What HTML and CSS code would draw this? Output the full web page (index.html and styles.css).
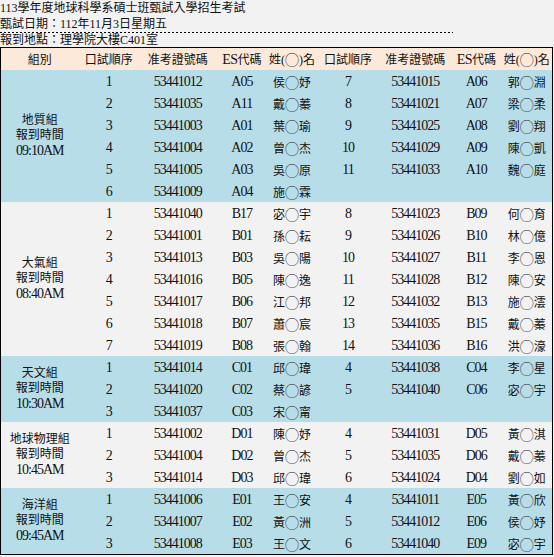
FILE: index.html
```html
<!DOCTYPE html>
<html lang="zh-Hant">
<head>
<meta charset="utf-8">
<title>113學年度地球科學系碩士班甄試入學招生考試</title>
<link rel="stylesheet" href="styles.css">
</head>
<body>
<div class="info">
  <div class="line">113學年度地球科學系碩士班甄試入學招生考試</div>
  <div class="line dotted">甄試日期：112年11月3日星期五</div>
  <div class="line last">報到地點：理學院大樓C401室</div>
</div>
<table class="sched">
  <colgroup>
    <col class="c1"><col class="c2"><col class="c3"><col class="c4"><col class="c5">
    <col class="c6"><col class="c7"><col class="c8"><col class="c9">
  </colgroup>
  <thead>
    <tr>
      <th>組別</th><th>口試順序</th><th>准考證號碼</th><th><span class="es">ES</span>代碼</th><th>姓(<span class="cir">◯</span>)名</th>
      <th>口試順序</th><th>准考證號碼</th><th><span class="es">ES</span>代碼</th><th>姓(<span class="cir">◯</span>)名</th>
    </tr>
  </thead>
  <tbody class="blue">
    <tr><td class="grp" rowspan="6">地質組<br>報到時間<br><span class="tm">09:10AM</span></td><td class="n">1</td><td class="n">53441012</td><td class="n">A05</td><td class="nm">侯<span class="cir">◯</span>妤</td><td class="n">7</td><td class="n">53441015</td><td class="n">A06</td><td class="nm">郭<span class="cir">◯</span>淵</td></tr>
    <tr><td class="n">2</td><td class="n">53441035</td><td class="n">A11</td><td class="nm">戴<span class="cir">◯</span>蓁</td><td class="n">8</td><td class="n">53441021</td><td class="n">A07</td><td class="nm">梁<span class="cir">◯</span>柔</td></tr>
    <tr><td class="n">3</td><td class="n">53441003</td><td class="n">A01</td><td class="nm">葉<span class="cir">◯</span>瑜</td><td class="n">9</td><td class="n">53441025</td><td class="n">A08</td><td class="nm">劉<span class="cir">◯</span>翔</td></tr>
    <tr><td class="n">4</td><td class="n">53441004</td><td class="n">A02</td><td class="nm">曾<span class="cir">◯</span>杰</td><td class="n">10</td><td class="n">53441029</td><td class="n">A09</td><td class="nm">陳<span class="cir">◯</span>凱</td></tr>
    <tr><td class="n">5</td><td class="n">53441005</td><td class="n">A03</td><td class="nm">吳<span class="cir">◯</span>原</td><td class="n">11</td><td class="n">53441033</td><td class="n">A10</td><td class="nm">魏<span class="cir">◯</span>庭</td></tr>
    <tr><td class="n">6</td><td class="n">53441009</td><td class="n">A04</td><td class="nm">施<span class="cir">◯</span>霖</td><td></td><td></td><td></td><td></td></tr>
  </tbody>
  <tbody class="gray">
    <tr><td class="grp" rowspan="7">大氣組<br>報到時間<br><span class="tm">08:40AM</span></td><td class="n">1</td><td class="n">53441040</td><td class="n">B17</td><td class="nm">宓<span class="cir">◯</span>宇</td><td class="n">8</td><td class="n">53441023</td><td class="n">B09</td><td class="nm">何<span class="cir">◯</span>育</td></tr>
    <tr><td class="n">2</td><td class="n">53441001</td><td class="n">B01</td><td class="nm">孫<span class="cir">◯</span>耘</td><td class="n">9</td><td class="n">53441026</td><td class="n">B10</td><td class="nm">林<span class="cir">◯</span>億</td></tr>
    <tr><td class="n">3</td><td class="n">53441013</td><td class="n">B03</td><td class="nm">吳<span class="cir">◯</span>陽</td><td class="n">10</td><td class="n">53441027</td><td class="n">B11</td><td class="nm">李<span class="cir">◯</span>恩</td></tr>
    <tr><td class="n">4</td><td class="n">53441016</td><td class="n">B05</td><td class="nm">陳<span class="cir">◯</span>逸</td><td class="n">11</td><td class="n">53441028</td><td class="n">B12</td><td class="nm">陳<span class="cir">◯</span>安</td></tr>
    <tr><td class="n">5</td><td class="n">53441017</td><td class="n">B06</td><td class="nm">江<span class="cir">◯</span>邦</td><td class="n">12</td><td class="n">53441032</td><td class="n">B13</td><td class="nm">施<span class="cir">◯</span>澐</td></tr>
    <tr><td class="n">6</td><td class="n">53441018</td><td class="n">B07</td><td class="nm">蕭<span class="cir">◯</span>宸</td><td class="n">13</td><td class="n">53441035</td><td class="n">B15</td><td class="nm">戴<span class="cir">◯</span>蓁</td></tr>
    <tr><td class="n">7</td><td class="n">53441019</td><td class="n">B08</td><td class="nm">張<span class="cir">◯</span>翰</td><td class="n">14</td><td class="n">53441036</td><td class="n">B16</td><td class="nm">洪<span class="cir">◯</span>濠</td></tr>
  </tbody>
  <tbody class="blue">
    <tr><td class="grp" rowspan="3">天文組<br>報到時間<br><span class="tm">10:30AM</span></td><td class="n">1</td><td class="n">53441014</td><td class="n">C01</td><td class="nm">邱<span class="cir">◯</span>瑋</td><td class="n">4</td><td class="n">53441038</td><td class="n">C04</td><td class="nm">李<span class="cir">◯</span>星</td></tr>
    <tr><td class="n">2</td><td class="n">53441020</td><td class="n">C02</td><td class="nm">蔡<span class="cir">◯</span>諺</td><td class="n">5</td><td class="n">53441040</td><td class="n">C06</td><td class="nm">宓<span class="cir">◯</span>宇</td></tr>
    <tr><td class="n">3</td><td class="n">53441037</td><td class="n">C03</td><td class="nm">宋<span class="cir">◯</span>甯</td><td></td><td></td><td></td><td></td></tr>
  </tbody>
  <tbody class="gray">
    <tr><td class="grp" rowspan="3">地球物理組<br>報到時間<br><span class="tm">10:45AM</span></td><td class="n">1</td><td class="n">53441002</td><td class="n">D01</td><td class="nm">陳<span class="cir">◯</span>妤</td><td class="n">4</td><td class="n">53441031</td><td class="n">D05</td><td class="nm">黃<span class="cir">◯</span>淇</td></tr>
    <tr><td class="n">2</td><td class="n">53441004</td><td class="n">D02</td><td class="nm">曾<span class="cir">◯</span>杰</td><td class="n">5</td><td class="n">53441035</td><td class="n">D06</td><td class="nm">戴<span class="cir">◯</span>蓁</td></tr>
    <tr><td class="n">3</td><td class="n">53441014</td><td class="n">D03</td><td class="nm">邱<span class="cir">◯</span>瑋</td><td class="n">6</td><td class="n">53441024</td><td class="n">D04</td><td class="nm">劉<span class="cir">◯</span>如</td></tr>
  </tbody>
  <tbody class="blue">
    <tr><td class="grp" rowspan="3">海洋組<br>報到時間<br><span class="tm">09:45AM</span></td><td class="n">1</td><td class="n">53441006</td><td class="n">E01</td><td class="nm">王<span class="cir">◯</span>安</td><td class="n">4</td><td class="n">53441011</td><td class="n">E05</td><td class="nm">黃<span class="cir">◯</span>欣</td></tr>
    <tr><td class="n">2</td><td class="n">53441007</td><td class="n">E02</td><td class="nm">黃<span class="cir">◯</span>洲</td><td class="n">5</td><td class="n">53441012</td><td class="n">E06</td><td class="nm">侯<span class="cir">◯</span>妤</td></tr>
    <tr><td class="n">3</td><td class="n">53441008</td><td class="n">E03</td><td class="nm">王<span class="cir">◯</span>文</td><td class="n">6</td><td class="n">53441040</td><td class="n">E09</td><td class="nm">宓<span class="cir">◯</span>宇</td></tr>
  </tbody>
</table>
</body>
</html>
```
FILE: styles.css
```css
html, body {
  margin: 0;
  padding: 0;
  background: #f2f2f2;
  color: #111;
  font-family: "Liberation Serif", "Noto Sans CJK TC", serif;
}

.info {
  font-size: 12px;
}

.info .line {
  height: 16px;
  line-height: 16px;
  white-space: nowrap;
}

.info .dotted {
  width: 453px;
  padding-bottom: 1px;
  background: repeating-linear-gradient(to right, #000 0 2px, transparent 2px 4px) left bottom / 100% 1px no-repeat;
}

.info .last {
  height: 14px;
  line-height: 14px;
}

.sched {
  border-collapse: collapse;
  table-layout: fixed;
  width: 553px;
  border: 1px solid #000;
}

.c1 { width: 78px; }
.c2 { width: 60px; }
.c3 { width: 78px; }
.c4 { width: 50px; }
.c5 { width: 50px; }
.c6 { width: 62px; }
.c7 { width: 72px; }
.c8 { width: 50px; }
.c9 { width: 51px; }

.sched th {
  background: #fde9d9;
  font-weight: normal;
  font-size: 12px;
  height: 22px;
  padding: 0;
  text-align: center;
  white-space: nowrap;
}

.sched th .es {
  font-size: 14px;
  letter-spacing: -0.5px;
}

.sched .cir {
  font-family: "Noto Sans CJK TC", sans-serif;
  font-size: 14px;
  line-height: 0;
  vertical-align: -1px;
  color: #333;
}

.sched td {
  height: 22px;
  padding: 0;
  text-align: center;
  vertical-align: middle;
  white-space: nowrap;
  font-size: 12px;
  line-height: 15px;
}

.sched td.n {
  font-size: 14px;
  letter-spacing: -1px;
}

.sched td.nm {
  font-family: "Noto Sans CJK TC", sans-serif;
  font-size: 12px;
  line-height: 15px;
}

.sched td.grp {
  font-size: 12px;
  line-height: 15px;
}

.sched td.grp .tm {
  font-size: 14px;
  letter-spacing: -1px;
  line-height: 15px;
}

.blue td { background: #b7dde8; }
.gray td { background: #f2f2f2; }
```
